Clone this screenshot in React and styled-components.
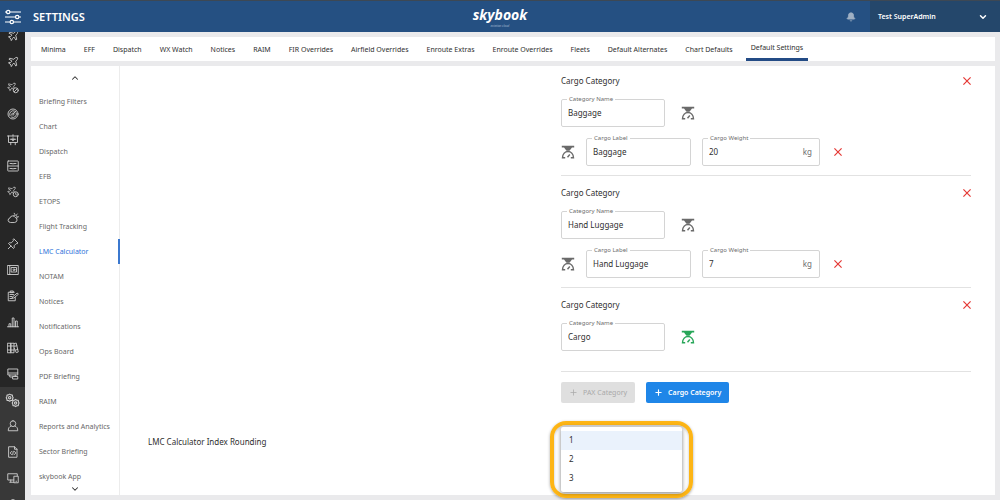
import { useState } from 'react'
import styled, { createGlobalStyle } from 'styled-components'
import { Bell, ChevronDown, ChevronUp, Plus } from 'lucide-react'

const GlobalStyle = createGlobalStyle`
    * {
        box-sizing: border-box;
    }

    body {
        margin: 0;
        background: #eaeaec;
        color: #2f2f2f;
        font-family: 'Noto Sans', 'Open Sans', sans-serif;
        font-size: 8px;
        line-height: 12px;
    }

    button, input, select {
        font: inherit;
        color: inherit;
    }

    svg {
        display: block;
        flex: none;
    }
`

const Page = styled.div`
    display: flex;
    flex-direction: column;
    height: 100vh;
    overflow: hidden;
`

const Header = styled.header`
    display: grid;
    grid-template-columns: 1fr auto 1fr;
    flex: none;
    height: 32px;
    border-top: 1px solid #3d4854;
    background: #255082;
    color: #fff;
`

const HeaderLeft = styled.div`
    display: flex;
    align-items: center;
    gap: 12px;
    padding-left: 5px;
`

const PageTitle = styled.h1`
    margin: 0;
    font-size: 11px;
    line-height: 16px;
    font-weight: 600;
`

const Logo = styled.div`
    align-self: center;
    display: flex;
    flex-direction: column;
    align-items: center;
    font-family: 'Open Sans', sans-serif;
    font-style: italic;
`

const LogoName = styled.span`
    font-size: 14px;
    line-height: 18px;
    font-weight: 700;
`

const LogoTag = styled.span`
    font-size: 3px;
    line-height: 4px;
    color: #a9bdd3;
`

const HeaderRight = styled.div`
    display: flex;
    justify-content: flex-end;
`

const BellButton = styled.button`
    display: flex;
    align-items: center;
    padding: 0 14px;
    border: 0;
    background: none;
    color: #9fb0c4;
`

const UserButton = styled.button`
    display: flex;
    align-items: center;
    justify-content: space-between;
    width: 130px;
    padding: 0 12px 0 8px;
    border: 0;
    background: #24476b;
    color: #fff;
    font-weight: 600;
    font-size: 7px;
`

const Main = styled.div`
    display: flex;
    flex: 1;
    min-height: 0;
`

const Rail = styled.nav`
    flex: none;
    width: 25px;
    overflow: hidden;
    background: #262626;
`

const RailList = styled.ul`
    margin: -9px 0 0;
    padding: 0;
    list-style: none;
`

const RailLink = styled.a`
    display: flex;
    align-items: center;
    justify-content: center;
    height: 26px;
    background: ${props => props.$lower ? '#383838' : '#262626'};
    color: #cfcfcf;
`

const Workspace = styled.div`
    display: flex;
    flex-direction: column;
    flex: 1;
    gap: 5px;
    min-width: 0;
    padding: 5px 5px 5px 6px;
`

const Tabs = styled.nav`
    display: flex;
    flex: none;
    gap: 8px;
    height: 24px;
    padding: 0 5px;
    background: #fff;
`

const Tab = styled.a`
    display: flex;
    align-items: center;
    padding: 1px 5px 0;
    border-bottom: ${props => props.$active ? '3px solid #234b85' : '0'};
    color: #2f2f2f;
    font-size: 7px;
    white-space: nowrap;
    text-decoration: none;
`

const Panel = styled.div`
    display: flex;
    flex: 1;
    min-height: 0;
    background: #fff;
`

const Sidebar = styled.aside`
    display: flex;
    flex-direction: column;
    flex: none;
    width: 89px;
    border-right: 1px solid #ececec;
`

const ScrollButton = styled.button`
    display: flex;
    align-items: center;
    justify-content: center;
    flex: none;
    height: ${props => props.$height}px;
    padding: 0;
    border: 0;
    background: none;
`

const SideList = styled.ul`
    flex: 1;
    min-height: 0;
    margin: 0 -1px 0 0;
    padding: 0;
    overflow: hidden;
    list-style: none;
`

const SideLink = styled.a`
    display: flex;
    align-items: center;
    height: 25px;
    padding-left: 8px;
    border-right: 2px solid ${props => props.$active ? '#3b78cf' : 'transparent'};
    color: ${props => props.$active ? '#2f73d9' : '#686868'};
    font-size: 7px;
    white-space: nowrap;
    text-decoration: none;
`

const Content = styled.main`
    display: grid;
    grid-template-columns: 1fr 1fr;
    grid-template-rows: auto auto;
    align-content: start;
    column-gap: 3px;
    flex: 1;
    min-width: 0;
    padding: 0 24px 0 28px;
`

const Categories = styled.div`
    grid-column: 2;
`

const Category = styled.section`
    padding: 11px 0 9px;
    border-bottom: 1px solid #e2e2e2;

    &:first-child {
        padding-top: 9px;
    }
`

const CategoryHead = styled.div`
    display: flex;
    align-items: center;
    justify-content: space-between;
    height: 12px;
    margin-bottom: 8px;
`

const CategoryTitle = styled.h2`
    margin: 0;
    font-size: 8px;
    font-weight: 400;
`

const IconButton = styled.button`
    display: flex;
    padding: 0;
    border: 0;
    background: none;
    color: ${props => props.$color || '#6a6a6a'};
`

const FieldRow = styled.div`
    display: flex;
    align-items: center;
    gap: 11px;

    & > ${IconButton} {
        padding-top: 4px;
    }

    & > ${IconButton}:last-child {
        padding-left: ${props => props.$inset}px;
    }

    & + & {
        margin-top: 7px;
    }
`

const Spacer = styled.div`
    height: 11px;
`

const Fieldset = styled.fieldset`
    display: flex;
    align-items: center;
    width: ${props => props.$width}px;
    height: 32px;
    margin: 0;
    padding: 0 7px 4px 5px;
    border: 1px solid #d4d4d4;
    border-radius: 2px;
`

const Legend = styled.legend`
    padding: 0 2px;
    color: #6d6d6d;
    font-size: 6px;
    line-height: 8px;
`

const TextInput = styled.input`
    flex: 1;
    width: 100%;
    min-width: 0;
    height: 16px;
    padding: 0 0 0 1px;
    border: 0;
    outline: 0;
    background: transparent;
`

const Unit = styled.span`
    color: #6d6d6d;
`

const Actions = styled.div`
    display: flex;
    gap: 11px;
    padding-top: 10px;
`

const ActionButton = styled.button`
    display: flex;
    align-items: center;
    gap: 5px;
    height: 21px;
    padding: 0 8px;
    border: 0;
    border-radius: 2px;
    background: #1f86e8;
    color: #fff;
    font-size: 7px;
    font-weight: 600;

    &:disabled {
        background: #dfdfdf;
        color: #a9a9a9;
        font-weight: 400;
    }
`

const SettingLabel = styled.label`
    padding-top: 33px;
`

const SelectCell = styled.div`
    position: relative;
`

const MenuHighlight = styled.div`
    position: absolute;
    top: 18px;
    left: -11px;
    padding: 2px 7px;
    border: 4px solid #fdb515;
    border-radius: 16px;
    box-shadow: 0 1px 3px rgba(0, 0, 0, 0.35), inset 0 1px 3px rgba(0, 0, 0, 0.25);
`

const Menu = styled.select`
    display: block;
    width: 121px;
    height: 65px;
    padding: 4px 0;
    overflow: hidden;
    border: 0;
    outline: 0;
    background: #fff;
    box-shadow: 0 1px 4px rgba(0, 0, 0, 0.5);

    option {
        height: 19px;
        min-height: 19px;
        padding: 3px 8px;
        color: #2f2f2f;
    }

    option:checked {
        background: #eaf2fc linear-gradient(#eaf2fc, #eaf2fc);
    }
`

const plane = 'M20.500 3.500c-1.200-1.200-3-.8-4 .2L13.600 6.600 5.500 4.500 3.800 6.200 10 10.200 7.200 13.200 4 12.700 2.800 14 6.500 16 8 19.200l.2 2L9.500 20.200 11 16.800 13.800 14l4 6.200 1.700-1.700-2.100-8.100 2.900-2.900c1-1 1.400-2.800.2-4z'

const Glyph = ({ size = 12, children }) => (
    <svg width={size} height={size} viewBox="0 0 24 24" fill="none" stroke="currentColor"
        strokeWidth="1.800" strokeLinecap="round" strokeLinejoin="round" aria-hidden="true">
        {children}
    </svg>
)

const PlaneBadge = ({ children }) => (
    <>
        <path transform="translate(-1 0) scale(.82)" d={plane} />
        <circle cx="17.500" cy="16.500" r="5" fill="#262626" />
        {children}
    </>
)

const railItems = [
    { name: 'Flights', icon: <path d={plane} /> },
    { name: 'Aircraft', icon: <path d={plane} /> },
    { name: 'Blocked flights', icon: <PlaneBadge><path d="M14.500 19.500l6-6" /></PlaneBadge> },
    { name: 'Radar', icon: <><circle cx="12" cy="12" r="10" /><path d="M6 15.500A7 7 0 0 1 15 6M9.500 14.500a3.500 3.500 0 0 1 2.500-5M11.500 12.500L18 6M18.500 9.500A7 7 0 0 1 9 18.300M14.500 12a3 3 0 0 1-2 2.500" /></> },
    { name: 'Dispatch', icon: <path d="M1 4h22M3 4v13h18V4M12 1.500V4M7.500 17v4.500M16.500 17v4.500M6.500 10.500h11M12 7.500v6M9 10.500l3 2.500 3-2.500" /> },
    { name: 'Archive', icon: <><rect x="1.500" y="2" width="21" height="20" rx="1" /><path d="M1.500 12h21M6 7h3.500M14.500 7H18M10 7.500h4M6 17h3.500M14.500 17H18M10 17.500h4" /></> },
    { name: 'Flight times', icon: <PlaneBadge><path d="M17.500 14V17l1.500 1" /></PlaneBadge> },
    { name: 'Weather', icon: <><path d="M6.500 21a4.500 4.500 0 0 1-.6-8.900 5.500 5.500 0 0 1 10.300-1.300A5.200 5.200 0 0 1 15.500 21zM13.500 6.800a4.300 4.300 0 0 1 6 6M14.500 2.500l.5 1.500M20.500 4l-1 1.200M23 9.500l-1.500.3" /></> },
    { name: 'Pinned', icon: <path d="M14 2l8 8-1.500 1.500-2-.3-4.300 4.300.3 4L13 21 3 11l1.500-1.500 4 .3 4.300-4.300-.3-2zM8 16l-5.500 5.500" /> },
    { name: 'Manuals', icon: <><path d="M1.500 3h21v18h-21zM5.500 3v18M9 7h10v9H9z" /><circle cx="14" cy="11.500" r="1.800" /></> },
    { name: 'Forms', icon: <path d="M14.500 4.500H2.500V21.500h14V15M6.500 4.500V2h6v2.500zM6 9h7M6 13h4M6 17h4M11.500 13.500L20.500 6l2.200 2.500-9 7.500-2.700.5z" /> },
    { name: 'Statistics', icon: <path d="M1 21.500h22M4 21.500v-6h3.500v6M10.500 21.500V4H14v17.500M17 21.500V10h3.500v11.500" /> },
    { name: 'Library', icon: <path d="M1.500 2.500H8v19H1.500zM8 2.500h6v19H8zM14.500 3l4-.8L22.500 20l-4 1.300-4-9M1.500 8H14M1.500 16H14M15.500 8.500l4-1M17.500 16l4-1" /> },
    { name: 'Briefing desk', icon: <path d="M2.500 2h19v12h-19zM2.500 10h19M5.500 14v4h6M12 17h9.500v5H12zM16.500 14v3" /> },
    {
        name: 'Settings', lower: true, size: 15, icon: <>
            <path d="M7.500 1.800l2 1.200 2.200.2.300 2.300 1 2-1 2-.3 2.300-2.200.2-2 1.200-2-1.200-2.200-.2-.3-2.300-1-2 1-2 .3-2.300 2.200-.2z" />
            <circle cx="7.500" cy="7.500" r="1.900" />
            <path d="M17 10.300l2 1.200 2.200.2.300 2.300 1 2-1 2-.3 2.300-2.200.2-2 1.200-2-1.200-2.200-.2-.3-2.300-1-2 1-2 .3-2.300 2.200-.2z" />
            <circle cx="17" cy="16" r="1.900" />
        </>
    },
    { name: 'Account', lower: true, icon: <path d="M12 1.500a5.500 5.500 0 0 0-5.500 5.500c0 2 .7 3.800 2 5C4.500 13.300 2.500 16 2.500 21.500h19c0-5.500-2-8.200-6-9.500 1.300-1.200 2-3 2-5A5.500 5.500 0 0 0 12 1.500zM8.500 12c2 1.600 5 1.600 7 0" /> },
    { name: 'Files', lower: true, icon: <path d="M4 1.500h11l5 5v16H4zM15 1.500v5h5M9 11l-2.500 3L9 17M15 11l2.500 3-2.500 3M12.500 10.500l-1 7" /> },
    { name: 'Devices', lower: true, icon: <path d="M13.500 16H1.500V3.500h19v4M7.500 16v4M5.500 20.500h8M14.500 8.500h8v13h-8zM18 18.500h1" /> },
    { name: 'Support', lower: true, icon: <><circle cx="12" cy="8" r="5" /><path d="M12 13v9" /></> },
]

const tabs = ['Minima', 'EFF', 'Dispatch', 'WX Watch', 'Notices', 'RAIM', 'FIR Overrides', 'Airfield Overrides',
    'Enroute Extras', 'Enroute Overrides', 'Fleets', 'Default Alternates', 'Chart Defaults', 'Default Settings']

const sections = ['Briefing Filters', 'Chart', 'Dispatch', 'EFB', 'ETOPS', 'Flight Tracking', 'LMC Calculator', 'NOTAM',
    'Notices', 'Notifications', 'Ops Board', 'PDF Briefing', 'RAIM', 'Reports and Analytics', 'Sector Briefing', 'skybook App']

const categories = [
    { id: 'baggage', name: 'Baggage', items: [{ label: 'Baggage', weight: 20 }] },
    { id: 'hand', name: 'Hand Luggage', items: [{ label: 'Hand Luggage', weight: 7 }] },
    { id: 'cargo', name: 'Cargo', items: [] },
]

const SlidersIcon = () => (
    <svg width="16" height="16" viewBox="0 0 16 16" fill="none" stroke="currentColor" strokeWidth="1.2" aria-hidden="true">
        <path d="M0 3h1.500M5 3h11M0 8h10.500M14 8h2M0 13h5M8.500 13H16" />
        <circle cx="3.200" cy="3" r="1.700" />
        <circle cx="12.200" cy="8" r="1.700" />
        <circle cx="6.800" cy="13" r="1.700" />
    </svg>
)

const ScaleIcon = () => (
    <svg width="14" height="14" viewBox="0 0 14 14" fill="none" stroke="currentColor" aria-hidden="true">
        <path d="M.8.800h12.400v1.700H11L8.500 5.800h-3L3 2.500H.8z" fill="currentColor" stroke="none" />
        <path d="M4.200 12.700H1.500C1.700 9 4 6.500 7 6.500s5.300 2.500 5.500 6.200H9.800" strokeWidth="1.400" />
        <path d="M6.500 12.300L8.800 9.500" strokeWidth="1.400" />
    </svg>
)

const CrossIcon = () => (
    <svg width="8" height="8" viewBox="0 0 8 8" stroke="currentColor" strokeWidth="1.200" aria-hidden="true">
        <path d="M.4.400l7.200 7.200M7.600.400L.4 7.600" />
    </svg>
)

const Field = ({ id, label, width, value, unit }) => (
    <Fieldset $width={width}>
        <Legend><label htmlFor={id}>{label}</label></Legend>
        <TextInput id={id} defaultValue={value} />
        {unit && <Unit>{unit}</Unit>}
    </Fieldset>
)

const CargoCategory = ({ id, name, items }) => (
    <Category>
        <CategoryHead>
            <CategoryTitle>Cargo Category</CategoryTitle>
            <IconButton $color="#e53935" aria-label="Remove category"><CrossIcon /></IconButton>
        </CategoryHead>
        <FieldRow $inset={5}>
            <Field id={`${id}-name`} label="Category Name" width={104} value={name} />
            <IconButton $color={items.length ? undefined : '#27a658'} aria-label="Add cargo weight"><ScaleIcon /></IconButton>
        </FieldRow>
        {items.map(item => (
            <FieldRow key={item.label} $inset={3}>
                <IconButton aria-label="Cargo weight"><ScaleIcon /></IconButton>
                <Field id={`${id}-label`} label="Cargo Label" width={105} value={item.label} />
                <Field id={`${id}-weight`} label="Cargo Weight" width={118} value={item.weight} unit="kg" />
                <IconButton $color="#e53935" aria-label="Remove weight"><CrossIcon /></IconButton>
            </FieldRow>
        ))}
        {items.length === 0 && <Spacer />}
    </Category>
)

const App = () => {
    const [rounding, setRounding] = useState('1')

    return (
        <Page>
            <GlobalStyle />
            <Header>
                <HeaderLeft>
                    <SlidersIcon />
                    <PageTitle>SETTINGS</PageTitle>
                </HeaderLeft>
                <Logo>
                    <LogoName>skybook</LogoName>
                    <LogoTag>aviation cloud</LogoTag>
                </Logo>
                <HeaderRight>
                    <BellButton aria-label="Notifications"><Bell size={10} fill="currentColor" /></BellButton>
                    <UserButton>Test SuperAdmin <ChevronDown size={10} strokeWidth={3.5} /></UserButton>
                </HeaderRight>
            </Header>
            <Main>
                <Rail>
                    <RailList>
                        {railItems.map(item => (
                            <li key={item.name}>
                                <RailLink href="#" aria-label={item.name} $lower={item.lower}>
                                    <Glyph size={item.size}>{item.icon}</Glyph>
                                </RailLink>
                            </li>
                        ))}
                    </RailList>
                </Rail>
                <Workspace>
                    <Tabs>
                        {tabs.map(tab => (
                            <Tab key={tab} href="#" $active={tab === 'Default Settings'}>{tab}</Tab>
                        ))}
                    </Tabs>
                    <Panel>
                        <Sidebar>
                            <ScrollButton $height={23} aria-label="Scroll up"><ChevronUp size={10} strokeWidth={2.5} /></ScrollButton>
                            <SideList>
                                {sections.map(section => (
                                    <li key={section}>
                                        <SideLink href="#" $active={section === 'LMC Calculator'}>{section}</SideLink>
                                    </li>
                                ))}
                            </SideList>
                            <ScrollButton $height={13} aria-label="Scroll down"><ChevronDown size={10} strokeWidth={2.5} /></ScrollButton>
                        </Sidebar>
                        <Content>
                            <Categories>
                                {categories.map(category => <CargoCategory key={category.id} {...category} />)}
                                <Actions>
                                    <ActionButton disabled><Plus size={9} /> PAX Category</ActionButton>
                                    <ActionButton><Plus size={9} strokeWidth={3} /> Cargo Category</ActionButton>
                                </Actions>
                            </Categories>
                            <SettingLabel htmlFor="rounding">LMC Calculator Index Rounding</SettingLabel>
                            <SelectCell>
                                <MenuHighlight>
                                    <Menu id="rounding" size={3} value={rounding} onChange={e => setRounding(e.target.value)}>
                                        <option>1</option>
                                        <option>2</option>
                                        <option>3</option>
                                    </Menu>
                                </MenuHighlight>
                            </SelectCell>
                        </Content>
                    </Panel>
                </Workspace>
            </Main>
        </Page>
    )
}

export default App
